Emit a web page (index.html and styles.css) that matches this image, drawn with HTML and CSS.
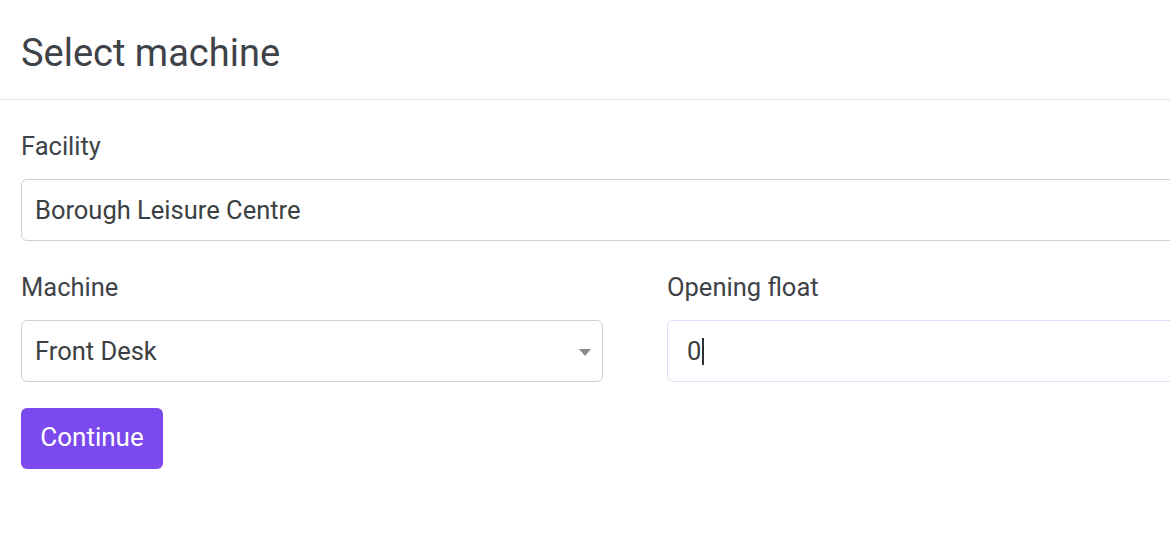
FILE: index.html
```html
<!DOCTYPE html>
<html lang="en">
<head>
<meta charset="utf-8">
<title>Select machine</title>
<link rel="stylesheet" href="styles.css">
</head>
<body>
<div class="page">
  <header class="page-header">
    <h1 class="page-title">Select machine</h1>
  </header>
  <form class="form">
    <div class="field">
      <label class="field-label">Facility</label>
      <div class="control">Borough Leisure Centre</div>
    </div>
    <div class="row">
      <div class="field">
        <label class="field-label">Machine</label>
        <div class="control control-select">
          <span>Front Desk</span>
          <span class="select-arrow"></span>
        </div>
      </div>
      <div class="field">
        <label class="field-label">Opening float</label>
        <div class="control control-number"><span>0</span><span class="cursor"></span></div>
      </div>
    </div>
    <button type="button" class="btn-primary">Continue</button>
  </form>
</div>
</body>
</html>
```

FILE: styles.css
```css
html, body {
  margin: 0;
  padding: 0;
  background: #ffffff;
  overflow: hidden;
}

body {
  font-family: Roboto, "Liberation Sans", Arial, sans-serif;
  color: #3f4348;
}

.page {
  width: 1270px;
}

.page-header {
  height: 99px;
  border-bottom: 1px solid #dfe3e8;
  display: flex;
  align-items: center;
  padding: 0 21px;
}

.page-title {
  margin: 8px 0 0;
  font-size: 38px;
  font-weight: 400;
  line-height: 1.2;
  color: #3f4348;
}

.form {
  padding: 29px 21px 0;
  display: flex;
  flex-direction: column;
}

.field {
  display: flex;
  flex-direction: column;
  margin-bottom: 29px;
}

.field-label {
  font-size: 25.5px;
  line-height: 34px;
  margin-bottom: 16px;
  color: #3f4348;
}

.control {
  box-sizing: border-box;
  height: 62px;
  border: 1px solid #cdd1d6;
  border-radius: 6px;
  padding: 0 13px;
  display: flex;
  align-items: center;
  font-size: 25.5px;
  color: #3c3f42;
  background: #fff;
}

.row {
  display: grid;
  grid-template-columns: 582px 582px;
  column-gap: 64px;
}

.row .field {
  margin-bottom: 26px;
}

.control-select {
  justify-content: space-between;
  padding-right: 11px;
}

.select-arrow {
  width: 0;
  height: 0;
  border-left: 6px solid transparent;
  border-right: 6px solid transparent;
  border-top: 7px solid #8a8a8a;
  margin-top: 2px;
}

.control-number {
  border-color: #dbe1f6;
  padding-left: 19px;
}

.cursor {
  display: inline-block;
  width: 2px;
  height: 27px;
  background: #2c2f33;
  margin-left: 1px;
}

.btn-primary {
  align-self: flex-start;
  width: 142px;
  height: 61px;
  border: none;
  border-radius: 6px;
  background: #7a4aee;
  color: #ffffff;
  font-family: Roboto, "Liberation Sans", Arial, sans-serif;
  font-size: 26px;
  padding: 0 0 3px;
  cursor: pointer;
}
```
